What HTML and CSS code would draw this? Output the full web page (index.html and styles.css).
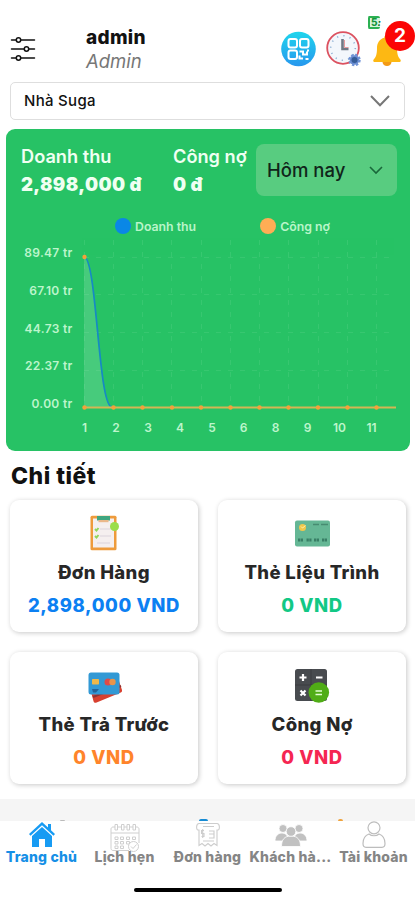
FILE: index.html
```html
<!DOCTYPE html>
<html lang="vi">
<head>
  <meta charset="utf-8">
  <meta name="viewport" content="width=device-width, initial-scale=1">
  <title>Trang chủ</title>
  <link rel="stylesheet" href="styles.css">
</head>
<body>
  <div class="app">
    <header class="header">
      <svg class="menu-icon" width="26" height="24" viewBox="0 0 26 24" fill="#fff" stroke="#111" stroke-width="1.5" stroke-linecap="round">
        <path d="M1.500 3h23M1.500 12h23M1.500 21h23"/>
        <circle cx="8.5" cy="3" r="2.2"/><circle cx="16.5" cy="12" r="2.2"/><circle cx="8.5" cy="21" r="2.2"/>
      </svg>
      <div class="user">
        <div class="user-name">admin</div>
        <div class="user-role">Admin</div>
      </div>
      <div class="actions">
        <svg width="36" height="36" viewBox="0 0 36 36">
          <defs><linearGradient id="qr" x1="0" y1="0" x2="0" y2="1"><stop offset="0" stop-color="#1fd5ec"/><stop offset="1" stop-color="#2797ee"/></linearGradient></defs>
          <circle cx="17.500" cy="18" r="17.3" fill="url(#qr)"/>
          <g fill="none" stroke="#fff" stroke-width="2">
            <rect x="7.500" y="8" width="8.500" height="8.500" rx="2"/><rect x="19" y="8" width="8.500" height="8.500" rx="2"/><rect x="7.500" y="19.500" width="8.500" height="8.500" rx="2"/>
            <path d="M18.500 20.500h3.500v3h4v-3M18.500 24.500v3h3.500M24.500 28h3M26 19.500h2"/>
          </g>
        </svg>
        <svg width="36" height="36" viewBox="0 0 36 36">
          <circle cx="17" cy="17" r="15.800" fill="#f3f7fc" stroke="#dc5260" stroke-width="1.8"/>
          <circle cx="17" cy="17" r="12.300" fill="none" stroke="#8fb1d4" stroke-width="1.600" stroke-dasharray="1.200 5.240"/>
          <path d="M16.500 8v10h6" fill="none" stroke="#707985" stroke-width="2.6"/>
          <path d="M18.500 9v7.500h4" fill="none" stroke="#e69a9d" stroke-width="1"/>
          <circle cx="28.500" cy="29" r="4.800" fill="#6689ce" stroke="#6f92d6" stroke-width="2.800" stroke-dasharray="2.200 1.570"/>
          <circle cx="28.500" cy="29" r="3" fill="#355c97"/>
        </svg>
        <div class="bell">
          <svg width="28" height="32" viewBox="0 0 28 32">
            <path d="M14 1c-1.700 0-2.700 1-2.700 2.700C6.500 5 4 9 4 14c0 6-1 9-3 11-1.500 1.700-.7 3 1 3h24c1.700 0 2.500-1.300 1-3-2-2-3-5-3-11 0-5-2.500-9-7.300-10.300C16.700 2 15.700 1 14 1z" fill="#fdb813"/>
            <path d="M9.500 28h9c-.3 2.500-2 4-4.500 4s-4.200-1.500-4.500-4z" fill="#f39a16"/>
          </svg>
          <span class="tag">5<i>:</i></span>
          <span class="badge">2</span>
        </div>
      </div>
    </header>

    <div class="branch">
      <span>Nhà Suga</span>
      <svg width="20" height="12" viewBox="0 0 20 12" fill="none" stroke="#777" stroke-width="2"><path d="M1 1l9 9.300L19 1"/></svg>
    </div>

    <section class="revenue">
      <div class="summary">
        <div class="total">
          <div class="total-label">Doanh thu</div>
          <div class="total-value">2,898,000 đ</div>
        </div>
        <div class="debt">
          <div class="total-label">Công nợ</div>
          <div class="total-value">0 đ</div>
        </div>
        <div class="period">
          <span>Hôm nay</span>
          <svg width="14" height="9" viewBox="0 0 14 9" fill="none" stroke="#19683a" stroke-width="1.600"><path d="M1 1l6 6 6-6"/></svg>
        </div>
      </div>
      <div class="legend">
        <span class="legend-item"><i class="dot dot-blue"></i>Doanh thu</span>
        <span class="legend-item"><i class="dot dot-orange"></i>Công nợ</span>
      </div>
      <svg class="chart" width="404" height="210" viewBox="6 237 404 210">
        <g class="grid">
          <path d="M84 257.500h308M84 294.500h308M84 332.500h308M84 370.500h308"/>
          <path d="M84.500 240v167M113.500 240v167M142.500 240v167M171.500 240v167M201.500 240v167M230.500 240v167M259.500 240v167M288.500 240v167M318.500 240v167M347.500 240v167M376.500 240v167"/>
        </g>
        <path d="M84 257C97 257 98 407 112 407H84z" fill="#fff" opacity=".15"/>
        <path d="M84 257C97 257 98 407 112 407" fill="none" stroke="#168ac4" stroke-width="1.700"/>
        <path d="M84 407.500h312" stroke="#d3b654" stroke-width="2.200"/>
        <g fill="#f4a13b">
          <circle cx="84.500" cy="257" r="2.200"/>
          <circle cx="84.500" cy="407.500" r="2.200"/><circle cx="113.500" cy="407.500" r="2.200"/><circle cx="142.500" cy="407.500" r="2.200"/><circle cx="172" cy="407.500" r="2.200"/><circle cx="201" cy="407.500" r="2.200"/><circle cx="230.500" cy="407.500" r="2.200"/><circle cx="259.500" cy="407.500" r="2.200"/><circle cx="288.500" cy="407.500" r="2.200"/><circle cx="318" cy="407.500" r="2.200"/><circle cx="347.500" cy="407.500" r="2.200"/><circle cx="376.500" cy="407.500" r="2.200"/>
        </g>
        <g class="y-labels">
          <text x="72.500" y="257">89.47 tr</text><text x="72.500" y="294.500">67.10 tr</text><text x="72.500" y="332.500">44.73 tr</text><text x="72.500" y="370">22.37 tr</text><text x="72.500" y="408">0.00 tr</text>
        </g>
        <g class="x-labels">
          <text x="84.500" y="432">1</text><text x="116" y="432">2</text><text x="148" y="432">3</text><text x="180" y="432">4</text><text x="212" y="432">5</text><text x="243.500" y="432">6</text><text x="275.500" y="432">8</text><text x="307.500" y="432">9</text><text x="339.500" y="432">10</text><text x="371.500" y="432">11</text>
        </g>
      </svg>
    </section>

    <h2 class="title">Chi tiết</h2>

    <div class="cards">
      <div class="card">
        <svg class="card-icon" width="36" height="36" viewBox="0 0 36 36">
          <rect x="4.500" y=".8" width="26" height="34.500" rx="1.500" fill="#ee9b3c"/>
          <path d="M7 3.500h21v29H7z" fill="#f5efef"/>
          <path d="M11 1h13v4.500H11z" fill="#3fa67f"/><path d="M12.500 5h10v2.200h-10z" fill="#eab88b"/>
          <path d="M14 14h11M14 21h11M11 28h13" stroke="#e3dde2" stroke-width="1.600"/>
          <path d="M9 14l1.500 1.500 2-2.500M9 21l1.500 1.500 2-2.500" fill="none" stroke="#91d65c" stroke-width="2"/>
          <circle cx="28.500" cy="11.500" r="4.500" fill="#9ade4b"/>
        </svg>
        <div class="card-name">Đơn Hàng</div>
        <div class="card-value blue">2,898,000 VND</div>
      </div>
      <div class="card">
        <svg class="card-icon" width="36" height="36" viewBox="0 0 36 36">
          <rect x="1" y="5.500" width="35" height="26" rx="2" fill="#65b795"/>
          <circle cx="8.500" cy="12.500" r="3.500" fill="#f1c84c"/><path d="M7 11.500l1.500 1.500 3-2.500" stroke="#fff2aa" fill="none"/>
          <path d="M19 9.500h6M27 9.500h7" stroke="#478c72" stroke-width="1.500"/>
          <path d="M4 25h5M12.500 25h5M20 25h5M28 25h5" stroke="#387e65" stroke-width="3" stroke-dasharray="2.300 .5 2.200 9"/>
        </svg>
        <div class="card-name">Thẻ Liệu Trình</div>
        <div class="card-value green">0 VND</div>
      </div>
      <div class="card">
        <svg class="card-icon" width="36" height="36" viewBox="0 0 36 36">
          <path d="M5 25l28-11 3 9c.4 1-.2 2-1.200 2.400L10 35.700c-1 .3-2-.1-2.400-1.200z" fill="#d8402f"/><path d="M7 30l28-11" stroke="#8d3434" stroke-width="2"/>
          <rect x="2.500" y="5.500" width="31" height="22" rx="2.500" fill="#3299d5"/>
          <rect x="6" y="12" width="7" height="5.500" rx=".7" fill="#efb84a"/>
          <circle cx="22" cy="15" r="3.500" fill="#e04a48"/><circle cx="26.500" cy="15" r="3.200" fill="#e8944a"/>
          <path d="M6 22h7l-3 3.500H7z" fill="#24649a"/>
        </svg>
        <div class="card-name">Thẻ Trả Trước</div>
        <div class="card-value orange">0 VND</div>
      </div>
      <div class="card">
        <svg class="card-icon" width="36" height="36" viewBox="0 0 36 36">
          <rect x="1" y="2" width="32" height="32" rx="2.500" fill="#484b4f"/>
          <path d="M17 2v32M1 18h32" stroke="#3a3d40" stroke-width="1"/>
          <path d="M5.500 10.500h7M9 7v7M22 10.500h6.500M6.500 23.500l5 5M11.500 23.500l-5 5" stroke="#fff" stroke-width="2.200"/>
          <circle cx="24.800" cy="25.500" r="10.300" fill="#50ad16"/>
          <path d="M21.500 24h6.500M21.500 27.500h6.500" stroke="#e1ffd1" stroke-width="1.600"/>
        </svg>
        <div class="card-name">Công Nợ</div>
        <div class="card-value red">0 VND</div>
      </div>
    </div>

    <div class="more"><i class="peek peek-grey"></i><i class="peek peek-blue"></i><i class="peek peek-orange"></i></div>

    <nav class="tabs">
      <div class="tab active">
        <svg width="28" height="28" viewBox="0 0 28 28" fill="#179bf3">
          <path d="M14 1L1 13l1.500 1.700L14 4.200l11.500 10.500L27 13l-4-3.800V3h-3v3.500z"/>
          <path d="M14 6L4 15v11h7v-8h6v8h7V15z"/>
        </svg>
        <span>Trang chủ</span>
      </div>
      <div class="tab">
        <svg width="30" height="31" viewBox="0 0 30 31" fill="none" stroke="#cfcfcf" stroke-width="1">
          <path d="M19 29.500H3c-1 0-2-1-2-2V8c0-1 1-2 2-2h24c1 0 2 1 2 2v14M1 12h28"/>
          <path d="M5 3.500h2.500V9H5zM11.500 3.500H14V9h-2.500zM17 3.500h2.500V9H17zM23 3.500h2.500V9H23z" fill="#fff"/>
          <path d="M5 16h3v2.500H5zM10.500 16h3v2.500h-3zM16.500 16h3v2.500h-3zM22.500 16h3v2.500h-3zM5 20.500h3V23H5zM10.500 20.500h3V23h-3zM16.500 20.500h3V23h-3zM5 25h3v2.500H5zM10.500 25h3v2.500h-3z"/>
          <circle cx="23.500" cy="25.500" r="5" fill="#fff"/><path d="M21 25.500l2 2 3.500-4"/>
        </svg>
        <span>Lịch hẹn</span>
      </div>
      <div class="tab">
        <svg width="26" height="28" viewBox="0 0 26 28" fill="none" stroke="#cdcdcd" stroke-width="1.100">
          <path d="M4 9H3C1 9 1 2.500 4 2.500h18c3 0 3 6.500 1 6.500h-1v15.500l-3-2-3 2.500-3-2.500-3 2.500-3-2.500-3 2z"/>
          <path d="M9 9.500H6.500v3H9v3H6.500M7.700 8v9M14 10h5v3h-5M14 17h5v-4M8 20h11M8 5.500h11"/>
        </svg>
        <span>Đơn hàng</span>
      </div>
      <div class="tab">
        <svg width="32" height="28" viewBox="0 0 32 28" fill="#c1c1c1" stroke="#fff" stroke-width=".8">
          <circle cx="8" cy="7.500" r="4"/><circle cx="24" cy="7.500" r="4"/>
          <path d="M0 20c0-5 3-8 7-8 3 0 5 2 6 4v4zM32 20c0-5-3-8-7-8-3 0-5 2-6 4v4z"/>
          <path d="M6.500 25.500c0-7 3-10.500 9.500-10.500s9.500 3.500 9.500 10.500z"/><circle cx="16" cy="10.500" r="4.800"/>
        </svg>
        <span>Khách hà...</span>
      </div>
      <div class="tab">
        <svg width="26" height="28" viewBox="0 0 26 28" fill="none" stroke="#bdbdbd" stroke-width="1.200">
          <circle cx="13" cy="6.800" r="6"/><path d="M8 13c-4 1.500-6 4.500-6 9.500 0 2.500 1 3.800 3 3.800h16c2 0 3-1.300 3-3.800 0-5-2-8-6-9.500-2.500 2.300-7.500 2.300-10 0z"/>
        </svg>
        <span>Tài khoản</span>
      </div>
    </nav>
    <div class="home-bar"></div>
  </div>
</body>
</html>
```
FILE: styles.css
```css
* {
  box-sizing: border-box;
}

body {
  margin: 0;
  background: #fff;
  font-family: Inter, "Noto Sans", sans-serif;
  color: #111;
}

svg {
  display: block;
  flex: none;
}

.app {
  width: 415px;
  height: 900px;
  overflow: hidden;
}

/* header */
.header {
  display: flex;
  height: 82px;
  padding: 24px 0 0 10px;
}

.menu-icon {
  margin-top: 13px;
}

.user {
  flex: none;
  width: 245px;
  padding-left: 50px;
  white-space: nowrap;
}

.user-name {
  font-size: 19px;
  line-height: 27px;
  font-weight: 800;
  letter-spacing: .3px;
}

.user-role {
  font-size: 18.5px;
  line-height: 20px;
  font-style: italic;
  color: #777;
}

.actions {
  display: flex;
  gap: 9px;
  padding-top: 7px;
}

.bell {
  position: relative;
  margin: 3px 0 0 2px;
}

.tag {
  position: absolute;
  left: -5px;
  top: -18px;
  width: 12px;
  height: 13px;
  border: 2px solid #2bb052;
  border-right-width: 0;
  border-radius: 2px;
  background: #d9f5df;
  color: #15963c;
  font-size: 10px;
  line-height: 9px;
  font-weight: 800;
  text-indent: 1px;
  white-space: nowrap;
}

.tag i {
  color: #08702a;
}

.badge {
  position: absolute;
  left: 12px;
  top: -13px;
  width: 30px;
  height: 30px;
  border-radius: 50%;
  background: #fb0505;
  color: #fff;
  font-size: 19px;
  line-height: 30px;
  font-weight: 700;
  text-align: center;
}

.branch {
  display: flex;
  align-items: center;
  justify-content: space-between;
  height: 38px;
  margin: 0 10px;
  padding: 0 14px 0 13px;
  border: 1px solid #dedede;
  border-radius: 5px;
  font-size: 15px;
  font-weight: 500;
  letter-spacing: .3px;
}

.branch span {
  margin-top: -2px;
}

/* revenue chart */
.revenue {
  height: 322px;
  margin: 9px 5px 0 6px;
  border-radius: 9px;
  background: #27c265;
  color: #effff2;
  overflow: hidden;
}

.summary {
  display: flex;
  height: 82px;
  padding: 14px 12px 0 15px;
  white-space: nowrap;
}

.total {
  width: 152px;
}

.debt {
  width: 83px;
}

.total-label {
  font-size: 18.2px;
  line-height: 26px;
  font-weight: 600;
}

.total-value {
  font-size: 18.5px;
  line-height: 31px;
  font-weight: 900;
  letter-spacing: .35px;
}

.period {
  display: flex;
  align-items: center;
  justify-content: space-between;
  width: 141px;
  height: 52px;
  margin-top: 1px;
  padding: 0 14px 0 11px;
  border-radius: 8px;
  background: #58cc80;
  color: #10251a;
  font-size: 18.5px;
  font-weight: 500;
}

.legend {
  display: flex;
  gap: 64px;
  height: 26px;
  padding: 7px 0 0 109px;
}

.legend-item {
  display: flex;
  align-items: center;
  gap: 4px;
  height: 16px;
  color: #b9f5c9;
  font-size: 12.3px;
  font-weight: 600;
}

.dot {
  width: 16px;
  height: 16px;
  border-radius: 50%;
}

.dot-blue {
  background: #0a87e6;
}

.dot-orange {
  background: #ffad55;
}

.grid {
  fill: none;
  stroke: #43cb78;
  stroke-width: 1;
  stroke-dasharray: 5 7;
  opacity: .6;
}

.y-labels,
.x-labels {
  fill: #bdf5cc;
  font-size: 12px;
  font-weight: 600;
}

.y-labels {
  text-anchor: end;
  letter-spacing: .3px;
}

.x-labels {
  text-anchor: middle;
}

.title {
  height: 49px;
  margin: 0;
  padding: 9px 0 0 11px;
  font-size: 23px;
  line-height: 32px;
  font-weight: 800;
  letter-spacing: .5px;
}

/* cards */
.cards {
  display: grid;
  grid-template-columns: 188px 188px;
  align-content: start;
  gap: 20px 20px;
  height: 299px;
  padding-left: 10px;
}

.card {
  height: 132px;
  padding-top: 15px;
  border-radius: 9px;
  background: #fff;
  box-shadow: 1px 1px 5px rgba(0, 0, 0, .22);
  text-align: center;
  white-space: nowrap;
}

.card-icon {
  margin: 0 auto;
}

.card-name {
  margin-top: 6px;
  font-size: 18.5px;
  line-height: 30px;
  font-weight: 800;
  letter-spacing: .35px;
  color: #272727;
}

.card-value {
  margin-top: 3px;
  font-size: 18.5px;
  line-height: 30px;
  font-weight: 800;
  letter-spacing: .6px;
}

.blue {
  color: #0c80f2;
}

.green {
  color: #12c885;
}

.orange {
  color: #ff842b;
}

.red {
  color: #f52652;
}

.more {
  position: relative;
  height: 22px;
  background: #f5f5f5;
}

/* tops of the next row, showing just above the tabs */
.peek {
  position: absolute;
  bottom: 0;
  height: 2px;
  border-radius: 3px 3px 0 0;
}

.peek-grey {
  left: 60px;
  width: 5px;
  height: 1px;
  background: #bbb;
}

.peek-blue {
  left: 199px;
  width: 9px;
  background: #168bd4;
}

.peek-orange {
  left: 338px;
  width: 5px;
  background: #efa33e;
}

/* bottom tabs */
.tabs {
  display: grid;
  grid-template-columns: repeat(5, 83px);
  height: 66px;
}

.tab {
  display: flex;
  flex-direction: column;
  align-items: center;
  color: #858585;
  font-size: 14px;
  line-height: 18px;
  font-weight: 800;
  letter-spacing: .2px;
  white-space: nowrap;
}

.tab svg {
  margin-bottom: -10px;
}

.tab span {
  margin-top: auto;
  margin-bottom: 21px;
}

.tab.active {
  color: #168fe6;
}

.home-bar {
  width: 148px;
  height: 4px;
  margin: 1px 0 0 134px;
  border-radius: 2px;
  background: #000;
}
```
